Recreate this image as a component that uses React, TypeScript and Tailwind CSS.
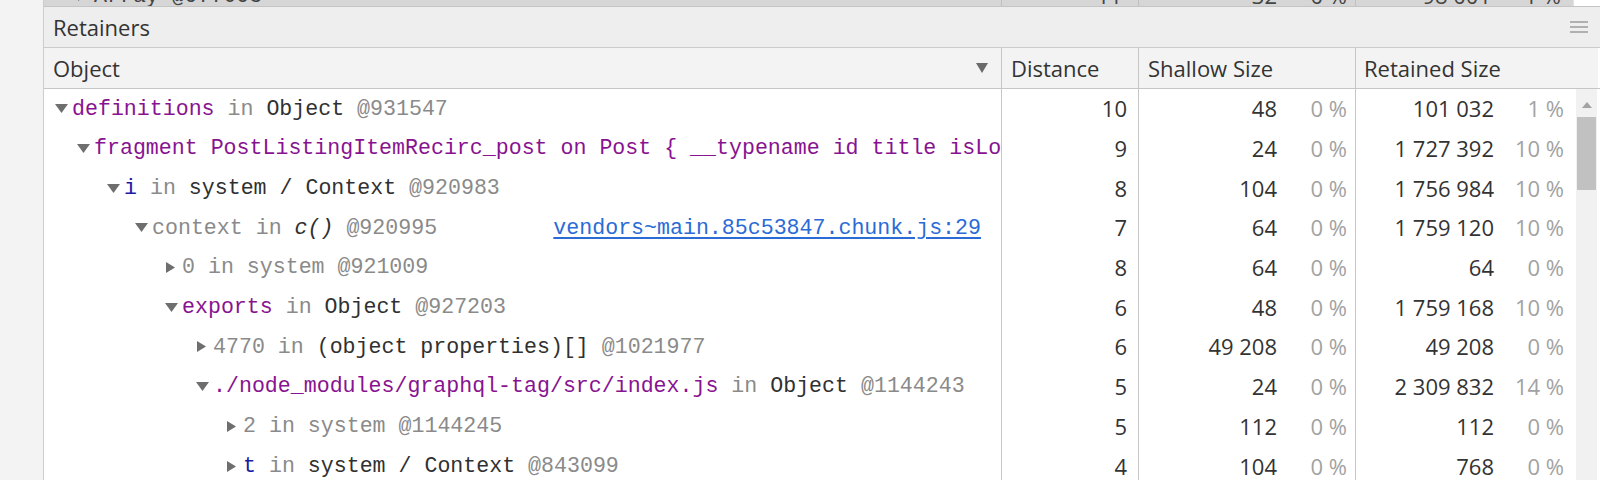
import React from "react";

type Seg = { t: string; c: string };

interface Row {
  indent: number;
  open: boolean;
  segs: Seg[];
  link?: string;
  distance: string;
  shallow: string;
  shallowPct: string;
  retained: string;
  retainedPct: string;
}

const P = "text-[#881391]";
const B = "text-[#1a1aa6]";
const G = "text-[#8a8a8a]";
const D = "text-[#303030]";
const I = "italic text-[#303030]";

const rows: Row[] = [
  {
    indent: 11,
    open: true,
    segs: [
      { t: "definitions", c: P },
      { t: " in ", c: G },
      { t: "Object", c: D },
      { t: " @931547", c: G },
    ],
    distance: "10",
    shallow: "48",
    shallowPct: "0 %",
    retained: "101 032",
    retainedPct: "1 %",
  },
  {
    indent: 33,
    open: true,
    segs: [
      {
        t: "fragment PostListingItemRecirc_post on Post { __typename id title isLo",
        c: P,
      },
    ],
    distance: "9",
    shallow: "24",
    shallowPct: "0 %",
    retained: "1 727 392",
    retainedPct: "10 %",
  },
  {
    indent: 63,
    open: true,
    segs: [
      { t: "i", c: B },
      { t: " in ", c: G },
      { t: "system / Context", c: D },
      { t: " @920983", c: G },
    ],
    distance: "8",
    shallow: "104",
    shallowPct: "0 %",
    retained: "1 756 984",
    retainedPct: "10 %",
  },
  {
    indent: 91,
    open: true,
    segs: [
      { t: "context", c: G },
      { t: " in ", c: G },
      { t: "c()", c: I },
      { t: " @920995", c: G },
    ],
    link: "vendors~main.85c53847.chunk.js:29",
    distance: "7",
    shallow: "64",
    shallowPct: "0 %",
    retained: "1 759 120",
    retainedPct: "10 %",
  },
  {
    indent: 121,
    open: false,
    segs: [{ t: "0 in system @921009", c: G }],
    distance: "8",
    shallow: "64",
    shallowPct: "0 %",
    retained: "64",
    retainedPct: "0 %",
  },
  {
    indent: 121,
    open: true,
    segs: [
      { t: "exports", c: P },
      { t: " in ", c: G },
      { t: "Object", c: D },
      { t: " @927203", c: G },
    ],
    distance: "6",
    shallow: "48",
    shallowPct: "0 %",
    retained: "1 759 168",
    retainedPct: "10 %",
  },
  {
    indent: 152,
    open: false,
    segs: [
      { t: "4770 in ", c: G },
      { t: "(object properties)[]", c: D },
      { t: " @1021977", c: G },
    ],
    distance: "6",
    shallow: "49 208",
    shallowPct: "0 %",
    retained: "49 208",
    retainedPct: "0 %",
  },
  {
    indent: 152,
    open: true,
    segs: [
      { t: "./node_modules/graphql-tag/src/index.js", c: P },
      { t: " in ", c: G },
      { t: "Object", c: D },
      { t: " @1144243", c: G },
    ],
    distance: "5",
    shallow: "24",
    shallowPct: "0 %",
    retained: "2 309 832",
    retainedPct: "14 %",
  },
  {
    indent: 182,
    open: false,
    segs: [{ t: "2 in system @1144245", c: G }],
    distance: "5",
    shallow: "112",
    shallowPct: "0 %",
    retained: "112",
    retainedPct: "0 %",
  },
  {
    indent: 182,
    open: false,
    segs: [
      { t: "t", c: B },
      { t: " in ", c: G },
      { t: "system / Context", c: D },
      { t: " @843099", c: G },
    ],
    distance: "4",
    shallow: "104",
    shallowPct: "0 %",
    retained: "768",
    retainedPct: "0 %",
  },
];

const sans = "font-['Open_Sans','Noto_Sans',sans-serif]";
const mono = "font-['Liberation_Mono',monospace]";

function Toggle({ open }: { open: boolean }) {
  return (
    <span className="w-[17px] shrink-0 flex items-center">
      {open ? (
        <svg width="13" height="9" viewBox="0 0 13 9">
          <path d="M0 0 H13 L6.5 9 Z" fill="#6e6e6e" />
        </svg>
      ) : (
        <svg width="9" height="11" viewBox="0 0 9 11" className="ml-[1px]">
          <path d="M0 0 L9 5.5 L0 11 Z" fill="#6e6e6e" />
        </svg>
      )}
    </span>
  );
}

function SizeCell({ value, pct, pr }: { value: string; pct: string; pr: string }) {
  return (
    <div className={`flex items-center justify-end ${pr}`}>
      <span className="text-[#333]">{value}</span>
      <span className="w-[70px] text-right text-[#a2a2a2]">{pct}</span>
    </div>
  );
}

export default function App() {
  return (
    <div className={`w-[1600px] h-[480px] overflow-hidden flex bg-white ${sans} text-[22px]`}>
      <div className="w-[44px] shrink-0 bg-[#f3f3f3] border-r border-[#cdcdcd]" />

      <div className="flex-1 flex flex-col min-w-0">
        {/* tail of the row above */}
        <div className="h-[7px] shrink-0 overflow-hidden border-b border-[#c4c4c4] flex">
          <div className="w-[1529px] bg-[#d6d6d6] overflow-hidden">
            <div className="mt-[-24px] h-[39.5px] grid grid-cols-[958px_137px_217px_1fr] text-[#444]">
              <div className={`flex items-center pl-[33px] border-r border-[#c0c0c0] ${mono} text-[21.6px]`}>
                <Toggle open={false} />
                <span>Array @977095</span>
              </div>
              <div className="flex items-center justify-end pr-[16px] border-r border-[#c0c0c0]">11</div>
              <div className="flex items-center justify-end pr-[8px] border-r border-[#c0c0c0]">
                <span>32</span>
                <span className="w-[70px] text-right">0 %</span>
              </div>
              <div className="flex items-center justify-end pr-[12px]">
                <span>98 001</span>
                <span className="w-[70px] text-right">1 %</span>
              </div>
            </div>
          </div>
          <div className="flex-1 bg-white border-l border-[#e2e2e2]" />
        </div>

        {/* Retainers title bar */}
        <div className="h-[41px] shrink-0 bg-[#eeeeee] border-b border-[#cbcbcb] flex items-center pl-[9px] pr-[12px]">
          <span className="text-[#333]">Retainers</span>
          <div className="ml-auto flex flex-col gap-[3px] w-[18px]">
            <div className="h-[2px] bg-[#b0b0b0]" />
            <div className="h-[2px] bg-[#b0b0b0]" />
            <div className="h-[2px] bg-[#b0b0b0]" />
          </div>
        </div>

        {/* column header */}
        <div className="h-[41px] shrink-0 flex border-b border-[#c6c6c6]">
          <div className="w-[1554px] bg-[#f3f3f3] grid grid-cols-[958px_137px_217px_1fr] text-[#333]">
            <div className="flex items-center pl-[9px] pr-[13px] border-r border-[#c6c6c6]">
              <span>Object</span>
              <svg width="12" height="10" viewBox="0 0 12 10" className="ml-auto">
                <path d="M0 0 H12 L6 10 Z" fill="#6a6a6a" />
              </svg>
            </div>
            <div className="flex items-center pl-[9px] border-r border-[#c6c6c6]">Distance</div>
            <div className="flex items-center pl-[9px] border-r border-[#c6c6c6]">Shallow Size</div>
            <div className="flex items-center pl-[8px]">Retained Size</div>
          </div>
          <div className="flex-1 bg-white" />
        </div>

        {/* data rows */}
        <div className="flex-1 flex min-h-0">
          <div className="w-[1532px] flex flex-col">
            {rows.map((row, i) => (
              <div key={i} className="h-[39.7px] shrink-0 grid grid-cols-[958px_137px_217px_1fr]">
                <div
                  className={`flex items-center overflow-hidden whitespace-nowrap border-r border-[#c6c6c6] ${mono} text-[21.6px]`}
                  style={{ paddingLeft: row.indent }}
                >
                  <Toggle open={row.open} />
                  <span className="whitespace-pre min-w-0 overflow-hidden">
                    {row.segs.map((s, j) => (
                      <span key={j} className={s.c}>
                        {s.t}
                      </span>
                    ))}
                  </span>
                  {row.link && (
                    <a className="ml-auto pr-[20px] text-[#2a6bd6] underline underline-offset-[3px]">
                      {row.link}
                    </a>
                  )}
                </div>
                <div className="flex items-center justify-end pr-[11px] border-r border-[#c6c6c6] text-[#333]">
                  {row.distance}
                </div>
                <div className="border-r border-[#c6c6c6] flex">
                  <div className="flex-1 flex items-center justify-end pr-[8px]">
                    <span className="text-[#333]">{row.shallow}</span>
                    <span className="w-[70px] text-right text-[#a2a2a2]">{row.shallowPct}</span>
                  </div>
                </div>
                <SizeCell value={row.retained} pct={row.retainedPct} pr="pr-[12px]" />
              </div>
            ))}
          </div>

          {/* scrollbar */}
          <div className="w-[21px] bg-[#f1f1f1] flex flex-col items-center">
            <svg width="10" height="6" viewBox="0 0 10 6" className="mt-[13px]">
              <path d="M0 6 L5 0 L10 6 Z" fill="#a3a3a3" />
            </svg>
            <div className="mt-[9px] w-[19px] h-[73px] bg-[#c1c1c1]" />
          </div>
          <div className="flex-1 bg-white" />
        </div>
      </div>
    </div>
  );
}
